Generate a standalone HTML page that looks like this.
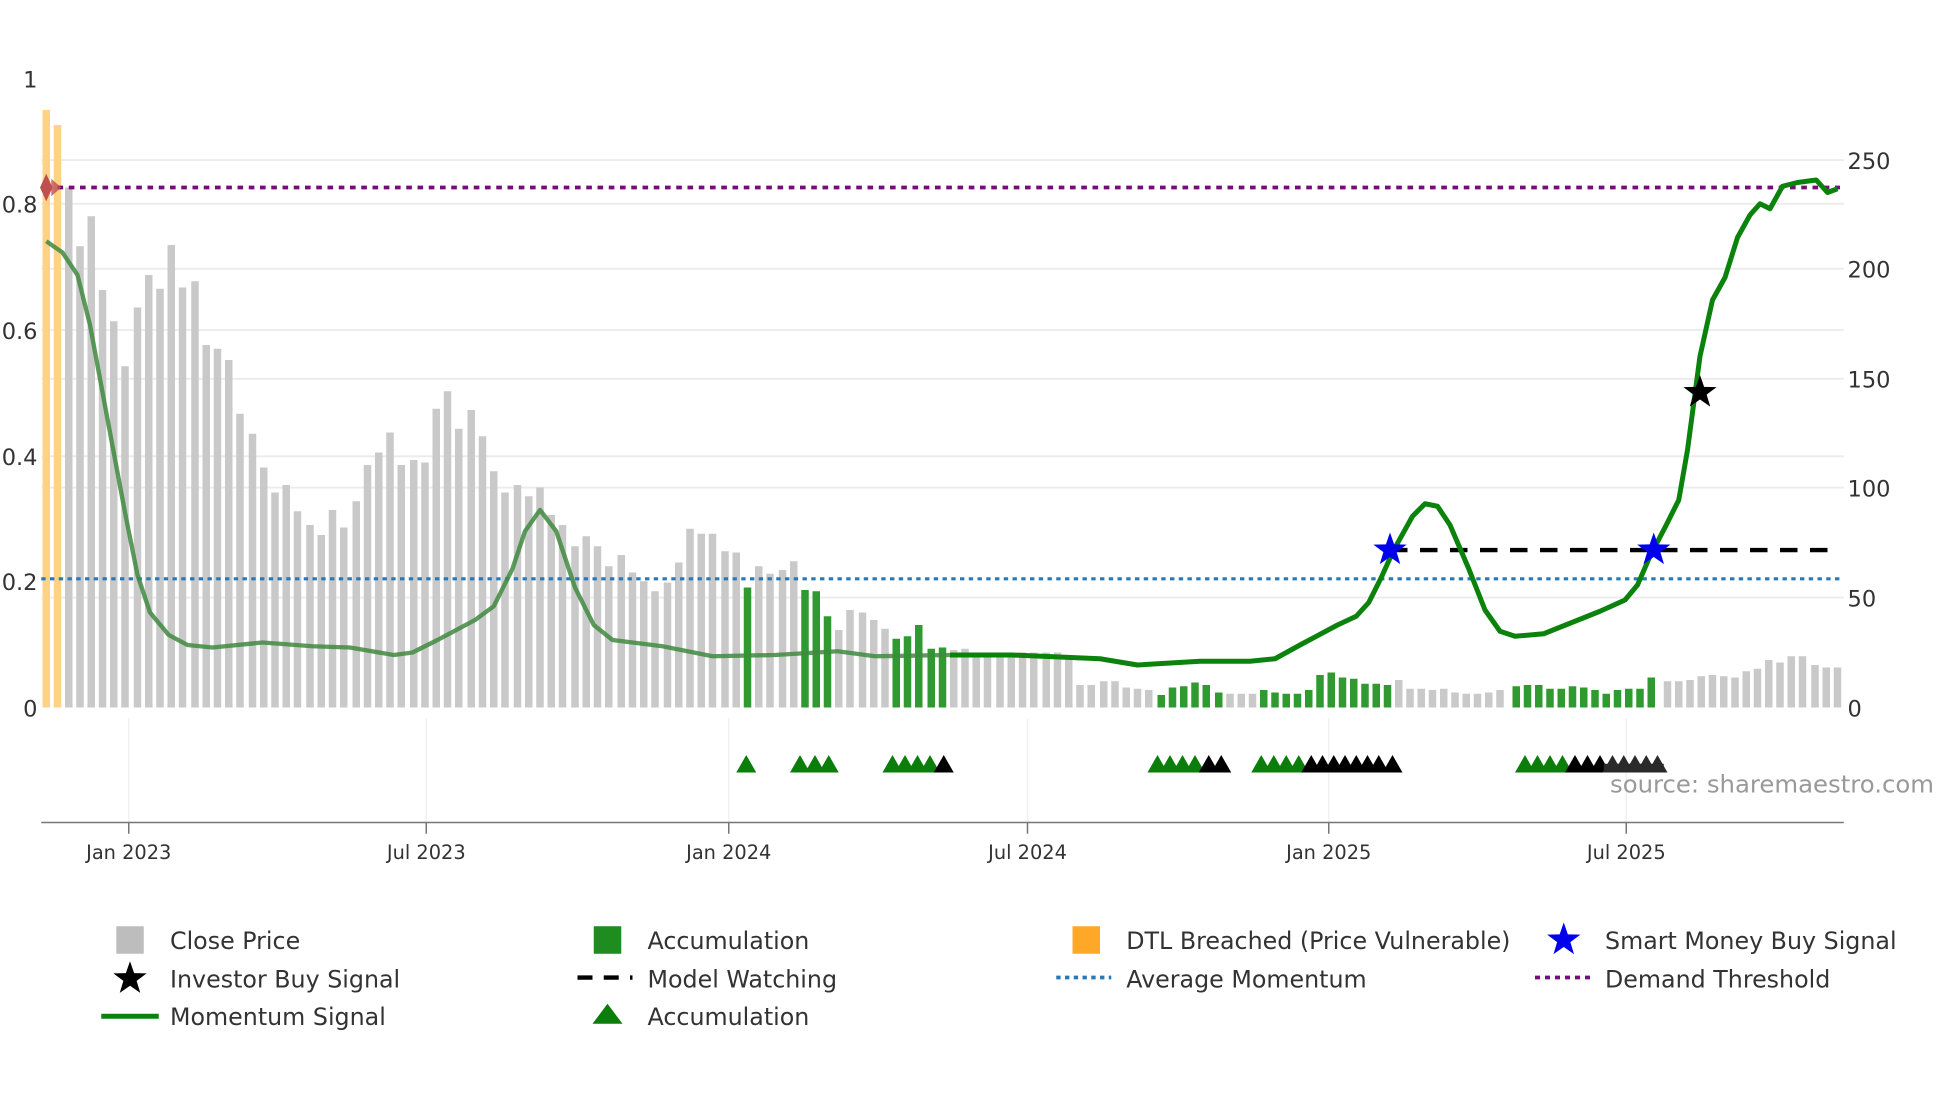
<!DOCTYPE html>
<html><head><meta charset="utf-8"><style>
html,body{margin:0;padding:0;background:#fff;overflow:hidden}
svg{display:block}
text{font-family:"DejaVu Sans","Liberation Sans",sans-serif;fill:#333}
</style></head><body>
<svg width="1960" height="1102" viewBox="0 0 1568 881.6" preserveAspectRatio="none" xmlns="http://www.w3.org/2000/svg">
<defs>
<polygon id="st" points="0,-14 3.3,-4.5 13.3,-4.3 5.3,1.7 8.2,11.3 0,5.6 -8.2,11.3 -5.3,1.7 -13.3,-4.3 -3.3,-4.5"/>
<polygon id="tr" points="-8,7 0,-7 8,7"/>
</defs>
<rect width="1568" height="882" fill="#fff"/>
<g stroke="#ebebeb" stroke-width="1.5">
<path d="M33 128H1475M33 215H1475M33 303H1475M33 390H1475M33 478H1475M33 163H1475M33 264H1475M33 365H1475"/>
</g>
<g stroke="#f0f0f0" stroke-width="1.2">
<path d="M103 575V658M341 575V658M583 575V658M822 575V658M1063 575V658M1301 575V658"/>
</g>
<path d="M37 88V566M46 100V566" stroke="#ffd285" stroke-width="6"/>
<path stroke="#c9c9c9" stroke-width="6" d="M55 150V566M64 197V566M73 173V566M82 232V566M91 257V566M100 293V566M110 246V566M119 220V566M128 231V566M137 196V566M146 230V566M156 225V566M165 276V566M174 279V566M183 288V566M192 331V566M202 347V566M211 374V566M220 394V566M229 388V566M238 409V566M248 420V566M257 428V566M266 408V566M275 422V566M285 401V566M294 372V566M303 362V566M312 346V566M321 372V566M331 368V566M340 370V566M349 327V566M358 313V566M367 343V566M377 328V566M386 349V566M395 377V566M404 394V566M414 388V566M423 397V566M432 390V566M441 412V566M450 420V566M460 437V566M469 429V566M478 437V566M487 453V566M497 444V566M506 458V566M515 465V566M524 473V566M534 466V566M543 450V566M552 423V566M561 427V566M570 427V566M580 441V566M589 442V566M607 453V566M616 459V566M626 456V566M635 449V566M671 504V566M680 488V566M690 490V566M699 496V566M708 503V566M763 520V566M772 519V566M781 522V566M790 523V566M800 524V566M809 524V566M818 522V566M827 522V566M837 522V566M846 522V566M855 527V566M864 548V566M873 548V566M883 545V566M892 545V566M901 550V566M910 551V566M919 552V566M984 555V566M993 555V566M1002 555V566M1119 544V566M1128 551V566M1137 551V566M1146 552V566M1155 551V566M1164 554V566M1173 555V566M1182 555V566M1191 554V566M1200 552V566M1334 545V566M1343 545V566M1352 544V566M1361 541V566M1370 540V566M1379 541V566M1388 542V566M1397 537V566M1406 535V566M1415 528V566M1424 530V566M1433 525V566M1442 525V566M1452 532V566M1461 534V566M1470 534V566"/>
<path stroke="#2f9a2f" stroke-width="6" d="M598 470V566M644 472V566M653 473V566M662 493V566M717 511V566M726 509V566M735 500V566M745 519V566M754 518V566M929 556V566M938 550V566M947 549V566M956 546V566M965 548V566M975 554V566M1011 552V566M1020 554V566M1029 555V566M1038 555V566M1047 552V566M1056 540V566M1065 538V566M1074 542V566M1083 543V566M1092 547V566M1101 547V566M1110 548V566M1213 549V566M1222 548V566M1231 548V566M1240 551V566M1249 551V566M1258 549V566M1267 550V566M1276 552V566M1285 555V566M1294 552V566M1303 551V566M1312 551V566M1321 542V566"/>
<path d="M37 150H1472" stroke="#7a0a7a" stroke-width="3" stroke-dasharray="4.5 4.5"/>
<path d="M33 463H1472" stroke="#2a78b8" stroke-width="2.5" stroke-dasharray="3.5 3.5"/>
<path d="M1112 440H1472" stroke="#000" stroke-width="3.5" stroke-dasharray="14 10"/>
<path fill="none" stroke="#3f8a3f" stroke-opacity="0.85" stroke-width="3.5" stroke-linejoin="round" d="M37 193L50 202L62 220L72 260L85 330L100 410L110 460L120 490L135 508L150 516L170 518L210 514L250 517L280 518L315 524L330 522L350 512L380 496L395 485L410 455L420 425L432 408L445 425L460 470L475 500L490 512L530 517L570 525L620 524L670 521L700 525L760 524"/>
<path fill="none" stroke="#0b820b" stroke-width="4" stroke-linejoin="round" d="M760 524L810 524L880 527L910 532L960 529L1000 529L1020 527L1040 516L1070 500L1085 493L1095 482L1105 462L1115 440L1130 413L1140 403L1150 405L1160 420L1175 455L1188 488L1200 505L1212 509L1235 507L1260 497L1280 489L1300 480L1310 468L1320 445L1333 420L1343 400L1350 360L1360 285L1370 240L1380 222L1390 190L1400 172L1408 163L1416 167L1426 149L1438 146L1453 144L1462 154L1470 151"/>
<polygon points="37,139 42,150 37,161 32,150" fill="#c0504d"/>
<polygon points="41,143 49,150 41,157" fill="#c0504d" opacity="0.8"/>
<use href="#st" x="1112" y="440" fill="#0000ee"/>
<use href="#st" x="1323" y="440" fill="#0000ee"/>
<use href="#st" x="1360" y="314" fill="#000"/>
<g fill="#0a7d0a">
<use href="#tr" x="597" y="611"/><use href="#tr" x="640" y="611"/><use href="#tr" x="652" y="611"/><use href="#tr" x="663" y="611"/>
<use href="#tr" x="714" y="611"/><use href="#tr" x="724" y="611"/><use href="#tr" x="734" y="611"/><use href="#tr" x="744" y="611"/>
<use href="#tr" x="926" y="611"/><use href="#tr" x="936" y="611"/><use href="#tr" x="946" y="611"/><use href="#tr" x="956" y="611"/>
<use href="#tr" x="1009" y="611"/><use href="#tr" x="1019" y="611"/><use href="#tr" x="1029" y="611"/><use href="#tr" x="1039" y="611"/>
<use href="#tr" x="1220" y="611"/><use href="#tr" x="1230" y="611"/><use href="#tr" x="1240" y="611"/><use href="#tr" x="1250" y="611"/>
</g>
<g fill="#000">
<use href="#tr" x="755" y="611"/>
<use href="#tr" x="967" y="611"/><use href="#tr" x="977" y="611"/>
<use href="#tr" x="1049" y="611"/><use href="#tr" x="1058" y="611"/><use href="#tr" x="1067" y="611"/><use href="#tr" x="1076" y="611"/><use href="#tr" x="1085" y="611"/><use href="#tr" x="1094" y="611"/><use href="#tr" x="1103" y="611"/><use href="#tr" x="1114" y="611"/>
<use href="#tr" x="1260" y="611"/><use href="#tr" x="1270" y="611"/><use href="#tr" x="1280" y="611"/>
</g>
<g fill="#2a2a2a">
<use href="#tr" x="1290" y="611"/><use href="#tr" x="1299" y="611"/><use href="#tr" x="1308" y="611"/><use href="#tr" x="1317" y="611"/><use href="#tr" x="1326" y="611"/>
</g>
<rect x="1283" y="611" width="48" height="7" fill="#2a2a2a"/>
<path d="M33 658H1475" stroke="#777" stroke-width="1.2"/>
<path d="M103 658V667M341 658V667M583 658V667M822 658V667M1063 658V667M1301 658V667" stroke="#777" stroke-width="1.2"/>
<g font-size="15.5" text-anchor="middle">
<text x="103" y="687">Jan 2023</text><text x="341" y="687">Jul 2023</text><text x="583" y="687">Jan 2024</text><text x="822" y="687">Jul 2024</text><text x="1063" y="687">Jan 2025</text><text x="1301" y="687">Jul 2025</text>
</g>
<g font-size="18" text-anchor="end">
<text x="30" y="70">1</text><text x="30" y="170">0.8</text><text x="30" y="271">0.6</text><text x="30" y="372">0.4</text><text x="30" y="472">0.2</text><text x="30" y="573">0</text>
</g>
<g font-size="18">
<text x="1478" y="135">250</text><text x="1478" y="222">200</text><text x="1478" y="310">150</text><text x="1478" y="397">100</text><text x="1478" y="485">50</text><text x="1478" y="573">0</text>
</g>
<text x="1288" y="634" font-size="19.5" style="fill:#999">source: sharemaestro.com</text>
<g font-size="19">
<rect x="93" y="741" width="22" height="22" fill="#bdbdbd"/><text x="136" y="759">Close Price</text>
<use href="#st" x="104" y="783" fill="#000"/><text x="136" y="790">Investor Buy Signal</text>
<path d="M81 813H127" stroke="#0b820b" stroke-width="4"/><text x="136" y="820">Momentum Signal</text>
<rect x="475" y="741" width="22" height="22" fill="#1e8c1e"/><text x="518" y="759">Accumulation</text>
<path d="M462 782H506" stroke="#000" stroke-width="3.5" stroke-dasharray="12 9"/><text x="518" y="790">Model Watching</text>
<polygon points="474,819 486,803 498,819" fill="#0a7d0a"/><text x="518" y="820">Accumulation</text>
<rect x="858" y="741" width="22" height="22" fill="#ffa726"/><text x="901" y="759">DTL Breached (Price Vulnerable)</text>
<path d="M845 782H889" stroke="#2a78b8" stroke-width="3" stroke-dasharray="3.5 3.5"/><text x="901" y="790">Average Momentum</text>
<use href="#st" x="1251" y="752" fill="#0000ee"/><text x="1284" y="759">Smart Money Buy Signal</text>
<path d="M1228 782H1272" stroke="#7a0a7a" stroke-width="3" stroke-dasharray="4 4"/><text x="1284" y="790">Demand Threshold</text>
</g>
</svg>
</body></html>
